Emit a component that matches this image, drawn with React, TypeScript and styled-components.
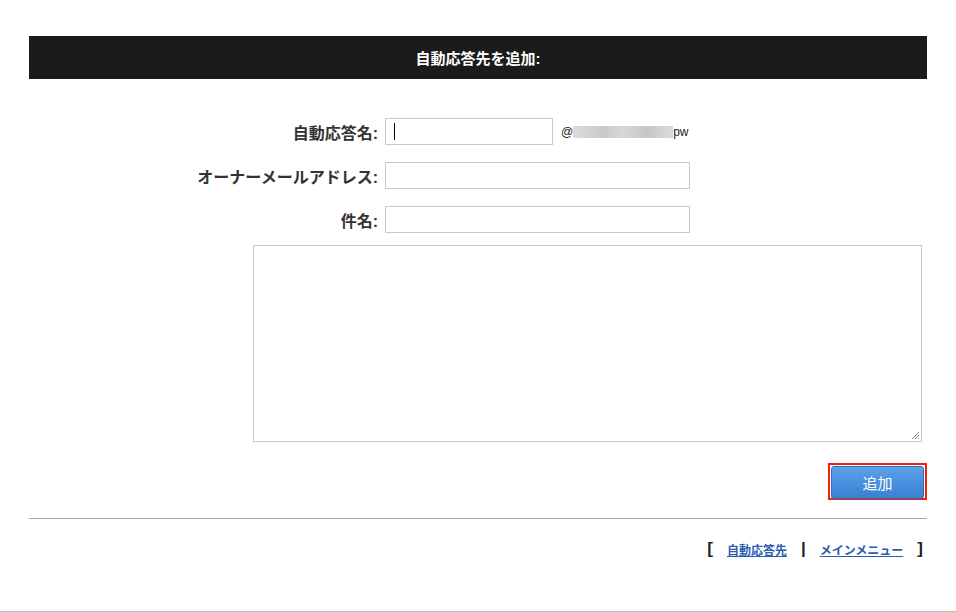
import React from "react";
import styled, { createGlobalStyle } from "styled-components";

const G = createGlobalStyle`
  html,body{margin:0;padding:0;background:#fff;}
  body{font-family:"Liberation Sans","Noto Sans CJK JP",sans-serif;color:#222;}
`;
const Page = styled.div`
  width:956px;height:612px;box-sizing:border-box;border-bottom:1px solid #bbb;
  padding:36px 29px 0 29px;
`;
const Header = styled.div`
  height:43px;background:#1b1b1b;color:#fff;font-weight:bold;font-size:15px;
  display:flex;align-items:center;justify-content:center;
`;
const Form = styled.div`
  padding-top:39px;display:grid;grid-template-columns:349px 1fr;row-gap:17px;column-gap:7px;align-items:center;
`;
const Label = styled.div`
  text-align:right;font-weight:bold;font-size:16px;color:#333;
`;
const Field = styled.div`display:flex;align-items:center;gap:8px;`;
const Input = styled.div<{ w: number }>`
  width:${p => p.w}px;height:27px;box-sizing:border-box;border:1px solid #c8c8c8;background:#fff;
  display:flex;align-items:center;padding-left:8px;
`;
const Caret = styled.span`width:1px;height:17px;background:#000;`;
const Domain = styled.span`font-size:12px;display:flex;align-items:center;`;
const Blur = styled.span`display:inline-block;width:100px;height:12px;
  background:linear-gradient(90deg,#ddd,#c9c9cc 30%,#d8d8d8 50%,#c5c5c8 75%,#ddd);`;
const TA = styled.div`
  margin:12px 5px 0 224px;height:197px;box-sizing:border-box;border:1px solid #c8c8c8;position:relative;
`;
const Grip = styled.svg`position:absolute;right:1px;bottom:1px;`;
const BtnRow = styled.div`display:flex;justify-content:flex-end;padding-top:21px;`;
const Btn = styled.button`
  width:99px;height:37px;border:2px solid #f0200a;padding:1px;background:#fff;box-sizing:border-box;
  & > span{display:flex;height:100%;align-items:center;justify-content:center;border-radius:3px;
  border:1px solid #2f6dba;background:linear-gradient(#5aa2e8,#3a7fd2);color:#fff;font-size:15px;
  font-family:"Liberation Sans","Noto Sans CJK JP",sans-serif;}
`;
const Hr = styled.div`margin-top:18px;border-top:1px solid #a8a8a8;`;
const Footer = styled.div`display:flex;justify-content:flex-end;align-items:center;gap:14px;padding:20px 4px 0 0;font-size:12px;`;
const Br = styled.span`font-weight:bold;font-size:17px;color:#222;`;
const A = styled.a`color:#2a5db0;text-decoration:underline;font-weight:bold;`;

export default function App() {
  return (
    <Page>
      <G />
      <Header>自動応答先を追加:</Header>
      <Form>
        <Label>自動応答名:</Label>
        <Field>
          <Input w={168}><Caret /></Input>
          <Domain>@<Blur />pw</Domain>
        </Field>
        <Label>オーナーメールアドレス:</Label>
        <Field><Input w={305} /></Field>
        <Label>件名:</Label>
        <Field><Input w={305} /></Field>
      </Form>
      <TA>
        <Grip width="9" height="9" viewBox="0 0 9 9">
          <path d="M8 1L1 8M8 4L4 8M8 7L7 8" stroke="#888" strokeWidth="1" />
        </Grip>
      </TA>
      <BtnRow><Btn><span>追加</span></Btn></BtnRow>
      <Hr />
      <Footer>
        <Br>[</Br>
        <A href="#">自動応答先</A>
        <Br>|</Br>
        <A href="#">メインメニュー</A>
        <Br>]</Br>
      </Footer>
    </Page>
  );
}
